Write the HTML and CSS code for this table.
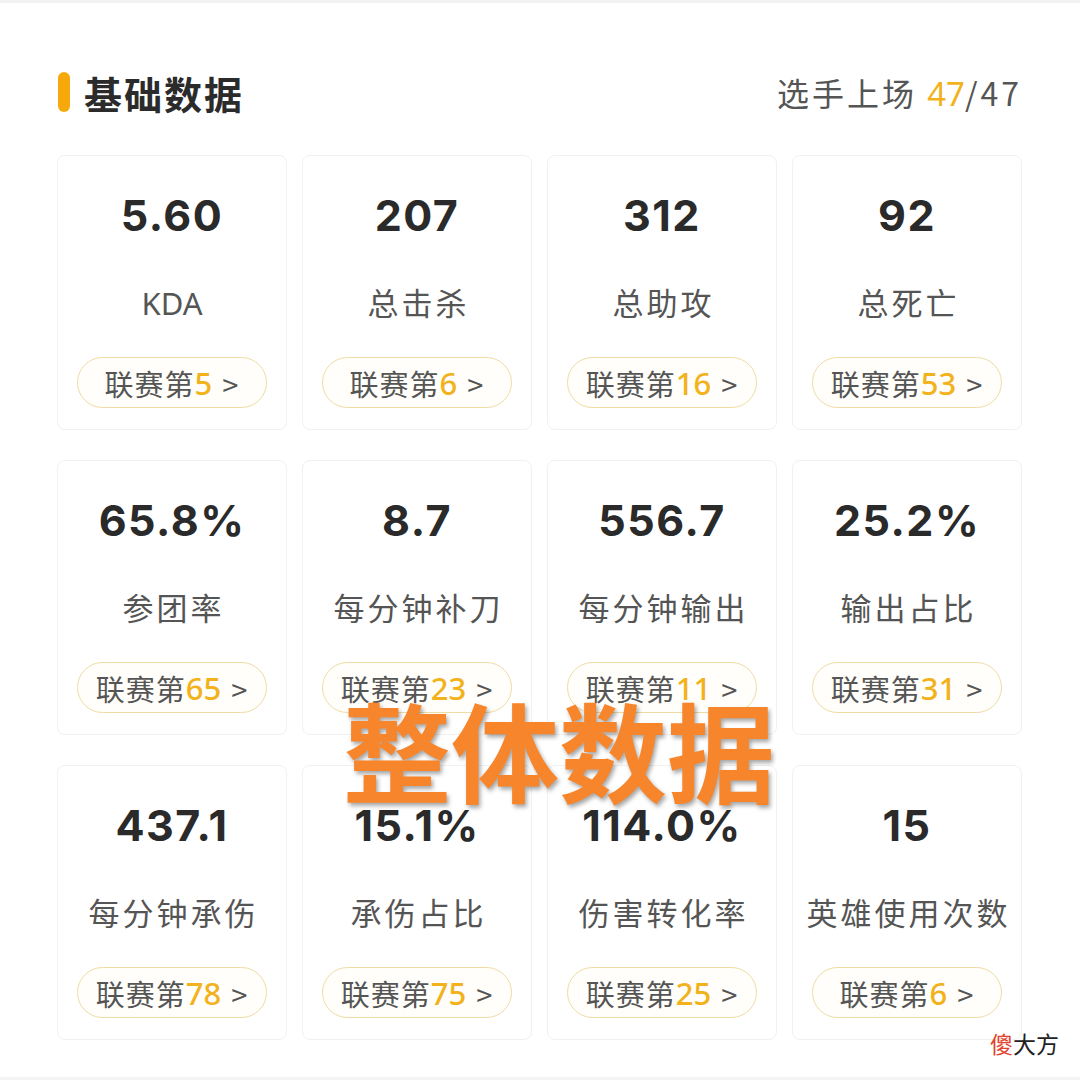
FILE: index.html
```html
<!DOCTYPE html>
<html lang="zh-CN">
<head>
<meta charset="utf-8">
<title>基础数据</title>
<link rel="stylesheet" href="styles.css">
</head>
<body>
<div class="topline"></div>
<div class="page">
    <div class="head">
        <div class="title"><i class="bar"></i>基础数据</div>
        <div class="played">选手上场 <em>47</em>/47</div>
    </div>
    <div class="grid">
        <div class="card"><b class="val">5.60</b><span class="name kda">KDA</span><a class="rank">联赛第<em>5</em>&gt;</a></div>
        <div class="card"><b class="val">207</b><span class="name">总击杀</span><a class="rank">联赛第<em>6</em>&gt;</a></div>
        <div class="card"><b class="val">312</b><span class="name">总助攻</span><a class="rank">联赛第<em>16</em>&gt;</a></div>
        <div class="card"><b class="val">92</b><span class="name">总死亡</span><a class="rank">联赛第<em>53</em>&gt;</a></div>

        <div class="card"><b class="val">65.8%</b><span class="name">参团率</span><a class="rank">联赛第<em>65</em>&gt;</a></div>
        <div class="card"><b class="val">8.7</b><span class="name">每分钟补刀</span><a class="rank">联赛第<em>23</em>&gt;</a></div>
        <div class="card"><b class="val">556.7</b><span class="name">每分钟输出</span><a class="rank">联赛第<em>11</em>&gt;</a></div>
        <div class="card"><b class="val">25.2%</b><span class="name">输出占比</span><a class="rank">联赛第<em>31</em>&gt;</a></div>

        <div class="card"><b class="val">437.1</b><span class="name">每分钟承伤</span><a class="rank">联赛第<em>78</em>&gt;</a></div>
        <div class="card"><b class="val">15.1%</b><span class="name">承伤占比</span><a class="rank">联赛第<em>75</em>&gt;</a></div>
        <div class="card"><b class="val">114.0%</b><span class="name">伤害转化率</span><a class="rank">联赛第<em>25</em>&gt;</a></div>
        <div class="card"><b class="val">15</b><span class="name">英雄使用次数</span><a class="rank">联赛第<em>6</em>&gt;</a></div>
    </div>
</div>
<div class="stamp">整体数据</div>
<div class="sign"><span>傻</span>大方</div>
<div class="bottomline"></div>
</body>
</html>
```

FILE: styles.css
```css
*{margin:0;padding:0;box-sizing:border-box}
html,body{width:1080px;height:1080px;background:#fff;overflow:hidden}
body{position:relative;font-family:"Noto Sans CJK SC","Noto Sans",sans-serif;color:#333}
em{font-style:normal}
.topline{height:3px;background:#f2f2f2}
.bottomline{position:absolute;left:0;right:0;bottom:0;height:3px;background:#f4f4f4}
.page{padding:0 58px 0 57px}
.head{display:flex;justify-content:space-between;align-items:center;height:44px;margin-top:67px}
.title{display:flex;align-items:center;font-size:38px;font-weight:700;color:#2b2b2b;letter-spacing:2px}
.title .bar{display:block;width:12px;height:40px;border-radius:6px;background:#f7a90b;margin:0 14px 0 1px}
.played{font-size:32px;color:#555;letter-spacing:3px}
.played em{color:#f2b21c;font-family:"Noto Sans",sans-serif;letter-spacing:0;font-size:33px}
.grid{display:grid;grid-template-columns:repeat(4,230px);grid-auto-rows:275px;column-gap:15px;row-gap:30px;margin-top:41px}
.card{display:flex;flex-direction:column;align-items:center;border:1px solid #f1f1f1;border-radius:8px;padding-top:33px}
.val{font-family:Inter,Roboto,sans-serif;font-size:43px;font-weight:700;line-height:52px;color:#2a2a2a;letter-spacing:1.5px}
.name{font-size:31px;line-height:40px;color:#555;margin-top:42px;letter-spacing:3px;text-indent:3px;font-family:"Noto Sans","Noto Sans CJK SC",sans-serif}
.name.kda{letter-spacing:0;text-indent:0}
.rank{display:flex;align-items:center;justify-content:center;width:190px;height:51px;margin-top:34px;border:1.5px solid #efdca4;border-radius:26px;background:#fffefa;font-size:29px;letter-spacing:1px;color:#555}
.rank em{color:#f2b21c;font-family:"Noto Sans",sans-serif;font-weight:500;font-size:31px;letter-spacing:0;margin-right:10px}
.stamp{position:absolute;left:343px;top:678px;font-size:108px;font-weight:700;line-height:140px;color:#f7852b;letter-spacing:0;text-shadow:2px 3px 4px rgba(0,0,0,.35)}
.sign{position:absolute;left:990px;top:1026px;font-size:23px;color:#222}
.sign span{color:#e2432c}
```
